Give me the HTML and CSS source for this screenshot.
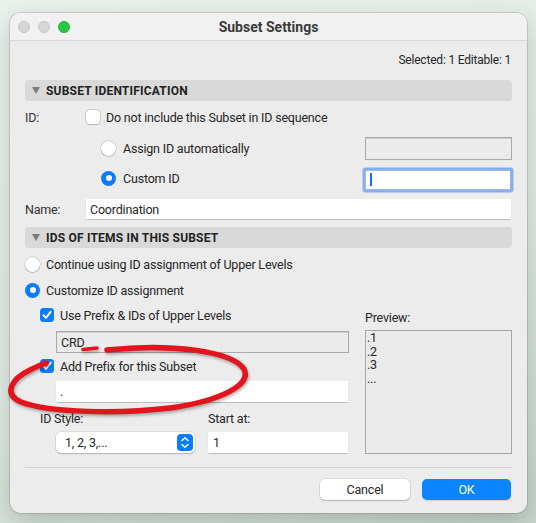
FILE: index.html
```html
<!DOCTYPE html>
<html lang="en">
<head>
  <meta charset="UTF-8">
  <title>Subset Settings</title>
  <link rel="stylesheet" href="styles.css">
</head>
<body>

  <div class="window">
    <div class="titlebar">
      <div class="lights">
        <span class="light gray"></span>
        <span class="light gray"></span>
        <span class="light green"></span>
      </div>
      <div class="title">Subset Settings</div>
      <div></div>
    </div>

    <div class="content">
      <div class="status">Selected: 1 Editable: 1</div>

      <!-- Subset identification -->
      <div class="section-head"><span class="tri"></span>SUBSET IDENTIFICATION</div>

      <div class="row">
        <span class="label">ID:</span>
        <span class="check"></span>
        <span class="opt-text">Do not include this Subset in ID sequence</span>
      </div>
      <div class="row row-field gap10">
        <span class="label"></span>
        <span class="radio indent"></span>
        <span class="radio-text">Assign ID automatically</span>
        <span class="spring"></span>
        <span class="field disabled small"></span>
      </div>
      <div class="row row-field raised">
        <span class="label"></span>
        <span class="radio indent on"></span>
        <span class="radio-text">Custom ID</span>
        <span class="spring"></span>
        <span class="field focus small"><span class="caret"></span></span>
      </div>
      <div class="row">
        <span class="label">Name:</span>
        <span class="field grow">Coordination</span>
      </div>

      <!-- IDs of items -->
      <div class="section-head second">
        <span class="tri"></span>IDS OF ITEMS IN THIS SUBSET
      </div>

      <div class="row top6">
        <span class="radio"></span>
        <span class="radio-text2">Continue using ID assignment of Upper Levels</span>
      </div>
      <div class="row top6">
        <span class="radio on"></span>
        <span class="radio-text2">Customize ID assignment</span>
      </div>

      <div class="items">
        <div class="items-left">
          <div class="row">
            <span class="check on"><svg width="14" height="14" viewBox="0 0 14 14"><path d="M3.5 7.2 L6 9.8 L10.6 3.8" fill="none" stroke="#fff" stroke-width="2" stroke-linecap="round" stroke-linejoin="round"/></svg></span>
            <span class="opt-text">Use Prefix &amp; IDs of Upper Levels</span>
          </div>
          <div class="field disabled wide">CRD</div>
          <div class="row top3">
            <span class="check on"><svg width="14" height="14" viewBox="0 0 14 14"><path d="M3.5 7.2 L6 9.8 L10.6 3.8" fill="none" stroke="#fff" stroke-width="2" stroke-linecap="round" stroke-linejoin="round"/></svg></span>
            <span class="opt-text">Add Prefix for this Subset</span>
          </div>
          <div class="field wide dot-field">.</div>

          <div class="style-grid">
            <div class="row top6">ID Style:</div>
            <div class="row top6">Start at:</div>
            <div class="popup">
              <span>1, 2, 3,...</span>
              <span class="stepper"><svg width="16" height="17" viewBox="0 0 16 17"><path d="M5 6.5 L8 3.8 L11 6.5 M5 10.5 L8 13.2 L11 10.5" fill="none" stroke="#fff" stroke-width="1.5" stroke-linecap="round" stroke-linejoin="round"/></svg></span>
            </div>
            <div class="field start">1</div>
          </div>
        </div>

        <div class="items-right">
          <div class="row top2">Preview:</div>
          <div class="preview">
            <div>.1</div>
            <div>.2</div>
            <div>.3</div>
            <div>...</div>
          </div>
        </div>
      </div>

      <div class="separator"></div>

      <div class="buttons">
        <span class="btn">Cancel</span>
        <span class="btn primary">OK</span>
      </div>
    </div>
  </div>

  <!-- red marker annotation -->
  <svg class="marker" width="536" height="523" viewBox="0 0 536 523">
    <path d="M83 349.5 L97 348" fill="none" stroke="#e3141b" stroke-width="3.5" stroke-linecap="round"/>
    <path d="M107 350 C 170 343, 232 351, 244 369 C 252 385, 220 401, 170 408 C 120 414, 50 413, 21 402 C 3 394, 11 379, 30 370 C 36 367, 40 365, 46 363" fill="none" stroke="#e3141b" stroke-width="5.5" stroke-linecap="round"/>
  </svg>

</body>
</html>
```

FILE: styles.css
```css
* {
  box-sizing: border-box;
}

body {
  margin: 0;
  width: 536px;
  height: 523px;
  overflow: hidden;
  position: relative;
  font-family: Roboto, "Liberation Sans", sans-serif;
  font-size: 12.5px;
  letter-spacing: -0.2px;
  color: #262626;
  background: linear-gradient(160deg, #eaf1ec 0%, #e0eae3 55%, #c6d4ca 100%);
}

.window {
  margin: 13px 0 0 10px;
  width: 517px;
  height: 500px;
  background: #ececec;
  border-radius: 11px;
  box-shadow: 0 0 0 1px rgba(0, 0, 0, 0.12), 0 8px 24px rgba(0, 0, 0, 0.18);
  overflow: hidden;
  display: flex;
  flex-direction: column;
}

.titlebar {
  height: 28px;
  flex: none;
  background: #f1f1f1;
  border-bottom: 1px solid #d8d8d8;
  display: grid;
  grid-template-columns: 1fr auto 1fr;
  align-items: center;
}

.lights {
  display: flex;
  gap: 8px;
  padding-left: 8px;
}

.light {
  width: 12px;
  height: 12px;
  border-radius: 50%;
}

.light.gray {
  background: #d6d6d6;
  border: 1px solid #c6c6c6;
}

.light.green {
  background: #2ac641;
  border: 1px solid #22b338;
}

.title {
  font-weight: 700;
  font-size: 14px;
  letter-spacing: 0;
  color: #3a3a3a;
}

.content {
  padding: 0 15px;
  display: flex;
  flex-direction: column;
}

.status {
  margin-top: 11px;
  height: 16px;
  line-height: 16px;
  font-size: 12px;
  text-align: right;
  padding-right: 1px;
}

.section-head {
  margin-top: 12px;
  height: 21px;
  background: #d9d9d9;
  border-radius: 4px;
  display: flex;
  align-items: center;
  padding-left: 7px;
  font-weight: 700;
  font-size: 12px;
  letter-spacing: 0.2px;
  color: #222;
}

.section-head.second {
  margin-top: 8px;
}

.section-head + .row {
  margin-top: 6px;
}

.tri {
  width: 0;
  height: 0;
  border-left: 4px solid transparent;
  border-right: 4px solid transparent;
  border-top: 7px solid #7d7d7d;
  margin-right: 6px;
}

.row {
  display: flex;
  align-items: center;
  height: 20px;
}

.row-field {
  height: 23px;
  margin-top: 8px;
}

.raised .radio,
.raised .radio-text {
  margin-bottom: 3px;
}

.gap10 {
  margin-top: 10px;
}

.top2 { margin-top: 2px; }
.top3 { margin-top: 3px; }
.top6 { margin-top: 6px; }

.row + .row:not(.row-field):not(.top6):not(.top3) {
  margin-top: 8px;
}

.label {
  width: 61px;
  flex: none;
  color: #333;
}

.spring {
  flex: 1;
}

.check {
  width: 14px;
  height: 14px;
  flex: none;
  border-radius: 3.5px;
  background: #fff;
  box-shadow: 0 0 0 0.5px rgba(0, 0, 0, 0.25), 0 1px 1px rgba(0, 0, 0, 0.12);
  display: flex;
}

.check.on {
  background: #0b7bff;
  box-shadow: none;
}

.opt-text {
  margin-left: 6px;
}

.radio {
  width: 15px;
  height: 15px;
  flex: none;
  border-radius: 50%;
  background: #fff;
  box-shadow: 0 0 0 0.5px rgba(0, 0, 0, 0.22), 0 1px 1px rgba(0, 0, 0, 0.12);
  display: flex;
  align-items: center;
  justify-content: center;
}

.radio.on {
  background: #0b7bff;
  box-shadow: none;
}

.radio.on::after {
  content: "";
  width: 6px;
  height: 6px;
  border-radius: 50%;
  background: #fff;
}

.radio.indent {
  margin-left: 15px;
}

.radio-text {
  margin-left: 7px;
}

.radio-text2 {
  margin-left: 6px;
}

.field {
  height: 20px;
  background: #fff;
  display: flex;
  align-items: center;
  padding-left: 4px;
  box-shadow: 0 0.5px 1px rgba(0, 0, 0, 0.2);
}

.field.grow {
  flex: 1;
  margin-right: 1px;
}

.field.small {
  width: 147px;
  height: 23px;
}

.field.disabled {
  background: #ebebeb;
  border: 1px solid #a9a9a9;
  box-shadow: inset 0 1px 0 #d0d0d0;
}

.field.focus {
  height: 20px;
  width: 146px;
  margin-right: 1px;
  border: 1px solid #9fb9e6;
  box-shadow: 0 0 0 2.5px #86aef0;
  border-radius: 1px;
}

.caret {
  width: 2px;
  height: 13px;
  background: #1a6cf0;
}

.items {
  margin-top: 5px;
  padding-left: 15px;
  display: grid;
  grid-template-columns: 309px 147px;
  column-gap: 16px;
}

.items-left {
  display: flex;
  flex-direction: column;
}

.field.wide {
  margin-left: 16px;
  width: 293px;
  height: 22px;
  margin-top: 6px;
}

.field.wide.dot-field {
  width: 292px;
  height: 21px;
  margin-top: 5px;
}

.style-grid {
  display: grid;
  grid-template-columns: 168px 141px;
}

.popup {
  margin: 4px 0 0 16px;
  width: 139px;
  height: 21px;
  background: #fff;
  border-radius: 5px;
  box-shadow: 0 0 0 0.5px rgba(0, 0, 0, 0.12), 0 1px 1.5px rgba(0, 0, 0, 0.2);
  display: flex;
  align-items: center;
  justify-content: space-between;
  padding: 0 2px 0 9px;
}

.stepper {
  width: 16px;
  height: 17px;
  border-radius: 4px;
  background: #0b7bff;
  display: flex;
}

.field.start {
  margin-top: 4px;
  width: 140px;
  height: 21px;
  padding-left: 5px;
}

.items-right {
  display: flex;
  flex-direction: column;
}

.preview {
  margin-top: 3px;
  height: 124px;
  background: #ebebeb;
  border: 1px solid #a6a6a6;
  padding-left: 1px;
  line-height: 13.5px;
}

.separator {
  margin-top: 13px;
  height: 1px;
  background: #d4d4d4;
}

.buttons {
  margin-top: 11px;
  display: flex;
  justify-content: flex-end;
  gap: 12px;
  padding-right: 1px;
}

.btn {
  width: 90px;
  height: 21px;
  border-radius: 5px;
  background: #fff;
  box-shadow: 0 0 0 0.5px rgba(0, 0, 0, 0.12), 0 1px 1.5px rgba(0, 0, 0, 0.2);
  display: flex;
  align-items: center;
  justify-content: center;
}

.btn.primary {
  width: 89px;
  background: #0a84ff;
  color: #fff;
  box-shadow: 0 1px 1px rgba(0, 0, 0, 0.12);
}

.marker {
  position: absolute;
  left: 0;
  top: 0;
  pointer-events: none;
  filter: drop-shadow(1px 2px 1.5px rgba(0, 0, 0, 0.3));
}
```
